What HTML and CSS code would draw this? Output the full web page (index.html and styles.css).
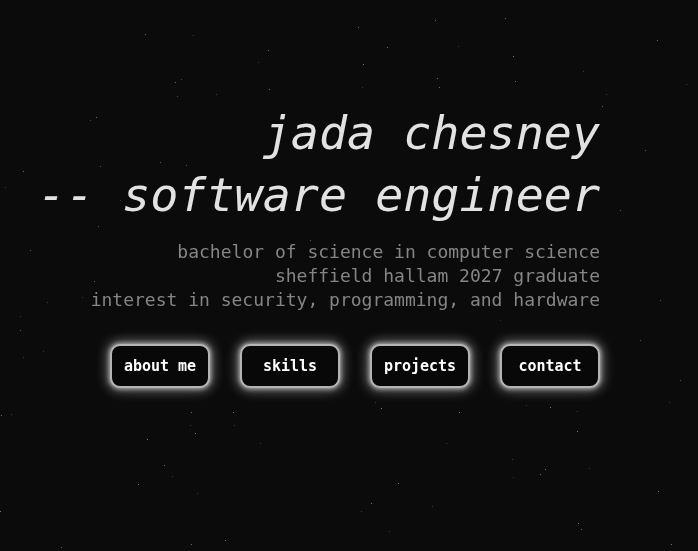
FILE: index.html
```html
<!DOCTYPE html>
<html lang="en">
<head>
<meta charset="utf-8">
<title>jada chesney</title>
<link rel="stylesheet" href="styles.css">
</head>
<body>
<div class="stars stars-bright"></div>
<div class="stars stars-dim"></div>
<main class="hero">
  <h1 class="title">jada chesney<br>-- software engineer</h1>
  <p class="subtitle">bachelor of science in computer science<br>sheffield hallam 2027 graduate<br>interest in security, programming, and hardware</p>
  <nav class="buttons">
    <a class="btn" href="#about">about me</a>
    <a class="btn" href="#skills">skills</a>
    <a class="btn" href="#projects">projects</a>
    <a class="btn" href="#contact">contact</a>
  </nav>
</main>
</body>
</html>
```
FILE: styles.css
```css
html, body {
  margin: 0;
  padding: 0;
  background: #0b0b0b;
  height: 100%;
  overflow: hidden;
}

body {
  font-family: "DejaVu Sans Mono", "Liberation Mono", monospace;
  color: #e6e6e6;
}

.stars {
  position: fixed;
  left: 0;
  top: 0;
  width: 1px;
  height: 1px;
  background: transparent;
  pointer-events: none;
}

.stars-bright {
  box-shadow:
    145px 34px #6a6a6a, 268px 50px #6a6a6a, 269px 89px #6a6a6a, 175px 82px #666,
    505px 18px #6a6a6a, 435px 20px #666, 358px 27px #666, 387px 47px #6a6a6a,
    363px 64px #777, 513px 56px #777, 437px 78px #6a6a6a, 439px 87px #6a6a6a,
    515px 81px #6a6a6a, 657px 40px #666, 602px 106px #666,
    96px 117px #666, 23px 171px #666, 98px 226px #555, 94px 281px #666,
    233px 412px #777, 191px 412px #666, 195px 433px #777, 147px 439px #777,
    164px 465px #666, 138px 484px #777, 225px 540px #777, 191px 544px #666,
    61px 547px #666, 0px 511px #777, 1px 415px #666,
    381px 408px #777, 459px 412px #777, 550px 407px #777, 577px 431px #777,
    545px 469px #777, 540px 474px #666, 398px 483px #777, 371px 503px #666,
    658px 491px #777, 578px 523px #777, 581px 529px #666, 671px 544px #777,
    303px 127px #555, 186px 165px #555, 100px 166px #555, 160px 162px #555,
    620px 210px #555, 645px 150px #555, 30px 250px #555, 660px 300px #555,
    640px 340px #555, 680px 380px #555, 20px 330px #555, 310px 240px #555;
}

.stars-dim {
  box-shadow:
    193px 35px #3a3a3a, 258px 62px #3a3a3a, 181px 79px #444, 177px 96px #444,
    216px 94px #3a3a3a, 458px 46px #3a3a3a, 583px 71px #3a3a3a, 606px 94px #3a3a3a,
    686px 84px #3a3a3a, 362px 87px #3a3a3a, 90px 120px #444, 5px 187px #3a3a3a,
    82px 297px #3a3a3a, 47px 302px #3a3a3a, 20px 316px #3a3a3a, 43px 351px #3a3a3a,
    23px 357px #3a3a3a, 11px 414px #3a3a3a, 190px 425px #3a3a3a, 234px 425px #444,
    260px 443px #3a3a3a, 172px 476px #3a3a3a, 197px 493px #3a3a3a,
    375px 402px #3a3a3a, 526px 405px #3a3a3a, 577px 411px #3a3a3a, 446px 443px #3a3a3a,
    512px 459px #3a3a3a, 513px 477px #3a3a3a, 589px 468px #3a3a3a, 669px 402px #3a3a3a,
    361px 511px #3a3a3a, 432px 506px #3a3a3a, 389px 531px #3a3a3a,
    270px 300px #333, 500px 320px #333, 560px 140px #333, 120px 200px #333;
}

.hero {
  position: relative;
  padding: 102px 98px 0 0;
  text-align: right;
}

.title {
  margin: 0;
  font-size: 46.7px;
  line-height: 62px;
  font-style: italic;
  font-weight: 400;
  color: #e2e2e2;
}

.subtitle {
  margin: 14px 0 0;
  font-size: 18px;
  line-height: 24px;
  color: #858585;
}

.buttons {
  display: flex;
  justify-content: flex-end;
  gap: 30px;
  margin-top: 32px;
}

.btn {
  box-sizing: border-box;
  width: 100px;
  height: 44px;
  display: flex;
  align-items: center;
  justify-content: center;
  background: #080808;
  border: 2px solid #b4b4b4;
  border-radius: 10px;
  box-shadow: 0 0 4px 1px rgba(255, 255, 255, 0.55), 0 0 12px 3px rgba(255, 255, 255, 0.4);
  color: #ffffff;
  font-weight: 700;
  font-size: 15px;
  text-decoration: none;
}
```
